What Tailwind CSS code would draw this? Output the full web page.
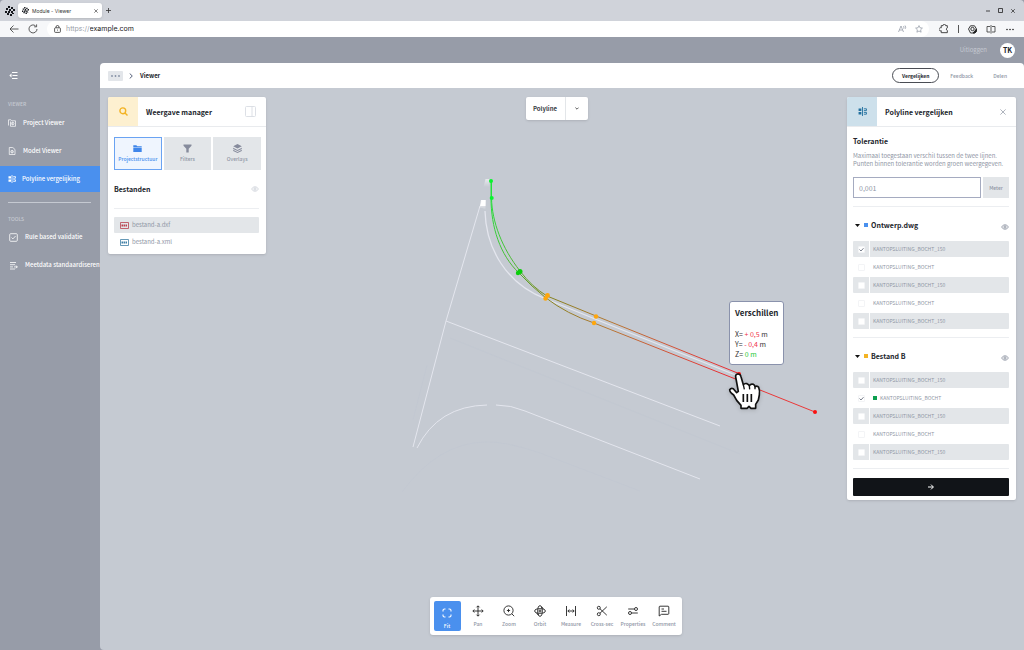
<!DOCTYPE html>
<html lang="nl">
<head>
    <meta charset="UTF-8">
    <meta name="viewport" content="width=device-width, initial-scale=1.0">
    <title>Module - Viewer</title>
    <script src="https://cdn.jsdelivr.net/npm/@tailwindcss/browser@4"></script>
</head>
<body class="bg-[#979ca8] font-['Noto_Sans_CJK_JP',sans-serif] text-[6px] leading-[8px] text-[#8f96a5]">
<div class="flex min-h-screen flex-col">

    <!-- Browser tabs -->
    <div class="flex h-[21px] items-center rounded-t-[4px] bg-[#d0d3da] pl-[5px] font-[Inter,sans-serif] text-[#333]">
        <svg class="size-[10px]" viewBox="0 0 10 10" fill="#16181d"><path d="M3 0h2v2H3zM6 1h2v2H6zM1 2h2v2H1zM4 3h2v2H4zM8 3h2v2H8zM0 5h2v2H0zM3 5h2v2H3zM6 5h2v2H6zM2 7h2v2H2zM5 8h2v2H5zM7 7h2v1H7z"/></svg>
        <div class="ml-[3px] flex h-[15px] w-[84px] items-center rounded-[3px] bg-white px-[4px] shadow-sm">
            <svg class="size-[7px]" viewBox="0 0 10 10" fill="#16181d"><path d="M3 0h2v2H3zM6 1h2v2H6zM1 2h2v2H1zM4 3h2v2H4zM8 3h2v2H8zM0 5h2v2H0zM3 5h2v2H3zM6 5h2v2H6zM2 7h2v2H2zM5 8h2v2H5zM7 7h2v1H7z"/></svg>
            <span class="ml-[3px] flex-1 text-[5px]">Module - Viewer</span>
            <button aria-label="Sluiten"><svg class="size-[4px]" viewBox="0 0 4 4" stroke="#333" stroke-width=".6"><path d="M.3.3l3.4 3.4M3.7.3L.3 3.7"/></svg></button>
        </div>
        <button class="ml-[4px]" aria-label="Nieuw tabblad"><svg class="size-[5px]" viewBox="0 0 5 5" stroke="#333" stroke-width=".8"><path d="M2.5 0v5M0 2.5h5"/></svg></button>
        <div class="ml-auto flex items-center gap-[8px] pr-[9px]">
            <svg class="size-[4px]" viewBox="0 0 4 4" stroke="#222" stroke-width=".8"><path d="M0 2h4"/></svg>
            <svg class="size-[5px]" viewBox="0 0 5 5" fill="none" stroke="#222" stroke-width=".8"><path d="M.5.5h4v4h-4z"/></svg>
            <svg class="size-[4px]" viewBox="0 0 4 4" stroke="#222" stroke-width=".7"><path d="M.2.2l3.6 3.6M3.8.2L.2 3.8"/></svg>
        </div>
    </div>

    <!-- Address bar -->
    <div class="flex h-[16px] items-center bg-[#f6f7f9] pl-[9px] pr-[10px]">
        <svg class="h-[8px] w-[10px]" viewBox="0 0 10 8" fill="none" stroke="#333" stroke-width=".8"><path d="M9.5 4H1M4.5.5L1 4l3.5 3.5"/></svg>
        <svg class="ml-[9px] size-[10px]" viewBox="0 0 10 10" fill="none" stroke="#333" stroke-width=".8"><path d="M9 5a4 4 0 1 1-1.500-3.200M8.600.4v2.400H6.200"/></svg>
        <div class="ml-[9px] flex h-[16px] flex-1 items-center rounded-full bg-white pl-[7px] pr-[6px] font-[Inter,sans-serif] text-[7px]">
            <svg class="h-[8px] w-[7px]" viewBox="0 0 7 8" fill="none" stroke="#333" stroke-width=".8"><rect x=".6" y="2.8" width="5.8" height="4.6" rx=".8"/><path d="M2 2.800V2a1.500 1.500 0 0 1 3 0v.8M3.500 4.600v1"/></svg>
            <label for="address" class="ml-[5px] text-[#9aa0a9]">https://</label>
            <input id="address" type="text" value="example.com" class="min-w-0 flex-1 text-[#222]">
            <svg class="h-[8px] w-[9px]" viewBox="0 0 9 8" fill="none" stroke="#8d93a1" stroke-width=".7"><path d="M.5 7L3 1l2.500 6M1.400 5h3.200M5.500 1q1 1 0 2.500M7 .5q1.600 1.500 0 3.500"/></svg>
            <svg class="ml-[8px] size-[8px]" viewBox="0 0 8 8" fill="none" stroke="#8d93a1" stroke-width=".7"><path d="M4 .6l1 2.200 2.400.3-1.800 1.700.5 2.400L4 6l-2.100 1.200.5-2.400L.6 3.100 3 2.800z"/></svg>
        </div>
        <div class="ml-[10px] flex items-center">
            <svg class="size-[10px]" viewBox="0 0 9 9" fill="none" stroke="#333" stroke-width=".8"><path d="M2 1.500h1.600a1.200 1.200 0 0 1 2.400 0h1.500v2a1.200 1.200 0 0 0 0 2.300v2H2V6A1.400 1.400 0 1 1 2 3.500z"/></svg>
            <span class="ml-[9px] h-[8px] w-px bg-[#555]"></span>
            <svg class="ml-[9px] size-[9px]" viewBox="0 0 9 9" fill="none" stroke="#222" stroke-width=".9"><path d="M2.500.8h4L8.500 4 6.500 8h-4L.5 4z"/><circle cx="4.5" cy="4" r="1.7"/><path d="M5 8l3.500-4v2.500L7 8z" fill="#222"/></svg>
            <svg class="ml-[9px] h-[9px] w-[10px]" viewBox="0 0 10 9" fill="none" stroke="#333" stroke-width=".8"><path d="M4 1.500H1v5.500h3M6 1.500h3v5.500H6M5 0v8.600"/></svg>
            <svg class="ml-[10px] h-[3px] w-[8px]" viewBox="0 0 8 3" fill="#222"><circle cx="1" cy="1.5" r=".8"/><circle cx="4" cy="1.5" r=".8"/><circle cx="7" cy="1.5" r=".8"/></svg>
        </div>
    </div>

    <!-- App header -->
    <header class="flex h-[26px] items-center justify-end gap-[13px] pr-[9px]">
        <a href="#" class="text-[#c5c9d1]">Uitloggen</a>
        <span class="grid size-[15px] place-items-center rounded-full bg-white text-[7px] font-bold text-[#22252b]">TK</span>
    </header>

    <div class="flex flex-1">
        <!-- Sidebar -->
        <nav class="w-[100px] shrink-0 whitespace-nowrap font-medium text-white">
            <button class="ml-[9px] mt-[8px] block" aria-label="Menu inklappen"><svg class="size-[9px]" viewBox="0 0 9 9" fill="none" stroke="#fff" stroke-width="1"><path d="M3 1.500h5.500M3.500 4.500h5M3 7.500h5.500"/><path d="M2.500 2.500v4L.3 4.500z" fill="#fff" stroke="none"/></svg></button>
            <h2 class="ml-[8px] mt-[20px] text-[5px] text-[#c5c9d1]">VIEWER</h2>
            <a href="#" class="mt-[2px] flex h-[26px] items-center gap-[7px] pl-[8px]">
                <svg class="size-[8px] shrink-0" viewBox="0 0 8 8" fill="none" stroke="#fff" stroke-width=".7"><path d="M.5 6.500v-5.700h2.400l.8 1h3.800v5.500H2.500V2.500"/><circle cx="4.7" cy="4.5" r="1.3"/><path d="M4.700 3.200v2.600"/></svg>
                Project Viewer
            </a>
            <a href="#" class="mt-[2px] flex h-[26px] items-center gap-[7px] pl-[8px]">
                <svg class="size-[8px] shrink-0" viewBox="0 0 8 8" fill="none" stroke="#fff" stroke-width=".7"><path d="M1.300.5h3.500l2.200 2v5H1.300z"/><circle cx="4.1" cy="4.7" r="1.3"/><path d="M4.100 3.400V6"/></svg>
                Model Viewer
            </a>
            <a href="#" class="mt-[2px] flex h-[26px] items-center gap-[6px] bg-[#4a90ee] pl-[8px]">
                <svg class="size-[8px] shrink-0" viewBox="0 0 8 8" fill="none" stroke="#fff" stroke-width=".8"><path d="M4 0v8M5.200 1.600h2.300v1.600H5.200M5.200 4.800h2.300v1.600H5.200"/><path d="M.5 1.300H3v2.200H.5zM.5 4.500H3v2.200H.5z" fill="#fff" stroke="none"/></svg>
                Polyline vergelijking
            </a>
            <hr class="ml-[8px] mr-[9px] mt-[10px] border-[#c5c9d1]">
            <h2 class="ml-[8px] mt-[12px] text-[5px] text-[#c5c9d1]">TOOLS</h2>
            <a href="#" class="mt-[1px] flex h-[26px] items-center gap-[7px] pl-[9px]">
                <svg class="size-[9px] shrink-0" viewBox="0 0 9 9" fill="none" stroke="#fff" stroke-width=".8"><rect x=".7" y=".7" width="7.6" height="7.6" rx="1"/><path d="M2.500 4.500l1.400 1.400L6.600 3"/></svg>
                Rule based validatie
            </a>
            <a href="#" class="mt-[2px] flex h-[26px] items-center gap-[7px] pl-[9px]">
                <svg class="size-[9px] shrink-0" viewBox="0 0 9 9" fill="none" stroke="#fff" stroke-width=".8"><path d="M1 1.500h6M1 3.700h5M1 5.900h3M1 8h5M5 5.900h3.500M6.700 4.500L8.300 5.900 6.700 7.300"/></svg>
                Meetdata standaardiseren
            </a>
        </nav>

        <main class="flex min-w-0 flex-1 flex-col overflow-hidden rounded-l-[4px] rounded-tr-[4px]">
            <div class="flex h-[25px] shrink-0 items-center bg-white pl-[8px] pr-[8px]">
                <button class="grid h-[10px] w-[15px] place-items-center rounded-[1px] bg-[#e3e6ea]" aria-label="Meer"><svg class="h-[2px] w-[9px]" viewBox="0 0 9 2" fill="#8490a5"><circle cx="1" cy="1" r=".9"/><circle cx="4.5" cy="1" r=".9"/><circle cx="8" cy="1" r=".9"/></svg></button>
                <svg class="ml-[6px] h-[6px] w-[4px]" viewBox="0 0 4 6" fill="none" stroke="#56617a" stroke-width="1"><path d="M.7.5L3.300 3 .7 5.500"/></svg>
                <span class="ml-[7px] font-bold text-[#22252b]">Viewer</span>
                <button class="ml-auto h-[15px] w-[47px] rounded-full border border-[#4a4d54] text-[5px] font-bold text-[#22252b]">Vergelijken</button>
                <button class="ml-[11px] text-[5px] font-medium">Feedback</button>
                <button class="ml-[20px] mr-[9px] text-[5px] font-medium">Delen</button>
            </div>

            <!-- Viewer canvas -->
            <div class="relative flex flex-1 flex-col justify-between bg-[#c5cad2]">
                <svg class="absolute left-0 top-0 h-[562px] w-[924px]" viewBox="100 88 924 562" fill="none">
                    <defs>
                        <linearGradient id="ramp" gradientUnits="userSpaceOnUse" x1="491" y1="190" x2="740" y2="375">
                            <stop offset="0" stop-color="#23e23c"/><stop offset=".22" stop-color="#55b235"/><stop offset=".36" stop-color="#85821f"/><stop offset=".58" stop-color="#b87635"/><stop offset=".85" stop-color="#dd4438"/><stop offset="1" stop-color="#ec2530"/>
                        </linearGradient>
                        <linearGradient id="blob" x1="0" y1="0" x2="0" y2="1"><stop offset="0" stop-color="#fff"/><stop offset="1" stop-color="#fff" stop-opacity="0"/></linearGradient>
                    </defs>
                    <g stroke="#bdc3cf" stroke-opacity=".5" stroke-width=".6">
                        <path d="M450 338L740 454M402 492Q438 443 485 442Q505 441 540 453L640 491M413 420L427 365"/>
                    </g>
                    <g stroke="#e4e6ee" stroke-width="1">
                        <path d="M480 206L446 321L413 447M446 321L720 426"/>
                        <path d="M417 448Q438 406 487 405M496 405Q511 405 525 411L700 479"/>
                        <path d="M485 211C486 248 506 284 546 299L600 321L738 376" stroke-width="1.3"/>
                    </g>
                    <path d="M481 200h4.500v10q-4-3-6-2z" fill="url(#blob)"/>
                    <path d="M480 206l2-6h3.500v6z" fill="#fff"/>
                    <path d="M485.500 179h4v8h-6z" fill="url(#blob)" opacity=".6"/>
                    <g stroke="url(#ramp)">
                        <path d="M491 181V198C491 227 500 255 519 273L532 286L546 298Q567 314 594 323L738 380"/>
                        <path d="M491.500 181V198C492 222 502 248 520 271Q532 287 547 296L596 316L740 374"/>
                    </g>
                    <path d="M755 388L815 412" stroke="#ea3838"/>
                    <g fill="#08f52d"><circle cx="491" cy="181" r="2"/><circle cx="491.7" cy="198" r="2"/></g>
                    <g fill="#0bce0b"><circle cx="520" cy="271.5" r="2.500"/><circle cx="518" cy="273" r="2.2"/></g>
                    <g fill="#ffa60c"><circle cx="547.5" cy="295.5" r="2.4"/><circle cx="545.5" cy="298.5" r="2.2"/><circle cx="596" cy="316.5" r="2.2"/><circle cx="594" cy="323" r="2.2"/></g>
                    <g fill="#fb1010"><circle cx="739" cy="374" r="2"/><circle cx="815" cy="412" r="2"/></g>
                </svg>

                <!-- Difference tooltip -->
                <div class="absolute left-[629px] top-[213px] w-[55px] rounded-[3px] border border-[#8a92ac] bg-white pt-[6px] pb-[5px] pl-[5px] text-[7px] leading-[10px] text-[#333]">
                    <h3 class="mb-[11px] text-[8px] font-bold text-[#22252b]">Verschillen</h3>
                    <p>X= <span class="text-[#f0304a]">+ 0,5</span> m</p>
                    <p>Y= <span class="text-[#f0304a]">- 0,4</span> m</p>
                    <p>Z= <span class="text-[#22c832]">0 m</span></p>
                </div>
                <svg class="absolute left-[628px] top-[284px] h-[38px] w-[34px] drop-shadow-sm" viewBox="264 243 102 114" stroke="#111" stroke-width="5" stroke-linejoin="round">
                    <path d="M287 258Q286 249 294 249Q301 249 303 257L310 281Q314 276 321 278Q326 280 328 284Q333 277 340 280Q344 282 345 287Q352 283 356 289Q360 297 358 312L355 327L347 340V352H333L327 346L321 352H303V343L290 328L281 312Q269 303 269 296Q273 290 280 293L290 305L295 301Z" fill="#fff"/>
                    <path d="M310 309v24M322 309v24M334 309v24"/>
                    <path d="M310 281l3 14M328 284l1 11M345 287v8" stroke-width="4"/>
                </svg>

                <div class="relative grid grid-cols-[1fr_auto_1fr] items-start pl-[8px] pr-[8px] pt-[9px]">
                    <!-- Weergave manager -->
                    <section class="w-[158px] rounded-[2px] bg-white shadow-sm">
                        <div class="flex h-[30px] items-center border-b border-[#e9ebee]">
                            <span class="grid h-[29px] w-[30px] place-items-center rounded-tl-[2px] bg-[#fdf0d0]"><svg class="size-[9px]" viewBox="0 0 9 9" fill="none" stroke="#f3b324" stroke-width="1.4"><circle cx="3.8" cy="3.8" r="2.9"/><path d="M6 6l2.500 2.500"/></svg></span>
                            <h2 class="ml-[8px] flex-1 text-[7px] font-bold text-[#22252b]">Weergave manager</h2>
                            <button class="mr-[10px]" aria-label="Paneel"><svg class="size-[11px]" viewBox="0 0 11 11" fill="none" stroke="#d9dde3" stroke-width=".9"><rect x=".5" y=".5" width="10" height="10" rx="1"/><path d="M7 .5v10"/></svg></button>
                        </div>
                        <div class="pb-[4px] pl-[6px] pr-[5px]">
                            <div class="mt-[10px] grid grid-cols-3 gap-[2px] text-[5px] font-medium">
                                <button class="flex h-[33px] flex-col items-center justify-center gap-[2px] border border-[#6aa3f2] bg-[#eff5fe] text-[#4a90ee]">
                                    <svg class="size-[9px]" viewBox="0 0 9 9" fill="#3f86ea"><path d="M.3 1.200h3l1 1h4.400v1H.3zM.3 3.700h8.400v4.300H.3z"/></svg>
                                    Projectstructuur
                                </button>
                                <button class="flex h-[33px] flex-col items-center justify-center gap-[2px] bg-[#e3e6e9]">
                                    <svg class="size-[9px]" viewBox="0 0 9 9" fill="#868b9c"><path d="M.5.5h8v1.300L5.700 4.800V8.500H3.300V4.800L.5 1.800z"/></svg>
                                    Filters
                                </button>
                                <button class="flex h-[33px] flex-col items-center justify-center gap-[2px] bg-[#e3e6e9]">
                                    <svg class="size-[9px]" viewBox="0 0 9 9" fill="#868b9c"><path d="M4.500 0L8.800 2.200 4.500 4.400.2 2.200zM.2 3.700l4.300 2.200 4.300-2.200v1.200L4.500 7 .2 4.900zM.2 5.800L4.500 8l4.300-2.200V7L4.500 9 .2 7z"/></svg>
                                    Overlays
                                </button>
                            </div>
                            <div class="mt-[14px] flex h-[10px] items-center justify-between pr-[2px]">
                                <h3 class="text-[7px] font-bold text-[#22252b]">Bestanden</h3>
                                <svg class="h-[6px] w-[8px]" viewBox="0 0 8 6" fill="none" stroke="#c6cbd4" stroke-width=".8"><path d="M.5 3Q4-1.500 7.500 3Q4 7.500.5 3z"/><circle cx="4" cy="3" r="1.1"/></svg>
                            </div>
                            <hr class="mr-[2px] mt-[14px] border-[#eceef1]">
                            <ul class="mr-[2px] mt-[8px]">
                                <li class="flex h-[16px] items-center gap-[3px] rounded-[1px] bg-[#e3e6e9] pl-[6px]">
                                    <svg class="h-[7px] w-[9px]" viewBox="0 0 9 7" fill="none" stroke="#b9414e" stroke-width=".8"><path d="M.5.5h8v6h-8z"/><path d="M1.500 3.500h6" stroke-width="2" stroke-dasharray="1.5 .5"/></svg>
                                    bestand-a.dxf
                                </li>
                                <li class="mt-[1px] flex h-[16px] items-center gap-[3px] pl-[6px]">
                                    <svg class="h-[7px] w-[9px]" viewBox="0 0 9 7" fill="none" stroke="#3f7fa5" stroke-width=".8"><path d="M.5.5h8v6h-8z"/><path d="M1.500 3.500h6" stroke-width="2" stroke-dasharray="1.5 .5"/></svg>
                                    bestand-a.xml
                                </li>
                            </ul>
                        </div>
                    </section>

                    <!-- Mode switch -->
                    <div class="mr-[11px] flex h-[23px] w-[62px] rounded-[2px] bg-white font-bold text-[#3a3e46] shadow-sm">
                        <button class="w-[40px] border-r border-[#e3e6e9]">Polyline</button>
                        <button class="grid flex-1 place-items-center" aria-label="Kies type"><svg class="h-[3px] w-[4px]" viewBox="0 0 4 3" fill="none" stroke="#333" stroke-width=".8"><path d="M.4.6L2 2.200 3.600.6"/></svg></button>
                    </div>

                    <!-- Polyline vergelijken -->
                    <section class="w-[169px] justify-self-end rounded-[2px] bg-white shadow-sm">
                        <div class="flex h-[30px] items-center border-b border-[#e9ebee]">
                            <span class="grid h-[29px] w-[30px] place-items-center rounded-tl-[2px] bg-[#cde0eb]"><svg class="size-[9px]" viewBox="0 0 8 8" fill="none" stroke="#23719f" stroke-width=".8"><path d="M4 0v8M5.200 1.600h2.300v1.600H5.200M5.200 4.800h2.300v1.600H5.200"/><path d="M.5 1.300H3v2.200H.5zM.5 4.500H3v2.200H.5z" fill="#23719f" stroke="none"/></svg></span>
                            <h2 class="ml-[8px] flex-1 text-[7px] font-bold text-[#22252b]">Polyline vergelijken</h2>
                            <button class="mr-[10px]" aria-label="Sluiten"><svg class="size-[6px]" viewBox="0 0 6 6" stroke="#8d93a1" stroke-width=".7"><path d="M.4.4l5.200 5.200M5.600.4L.4 5.600"/></svg></button>
                        </div>
                        <div class="pb-[4px] pl-[6px] pr-[7px]">
                            <label for="tolerance" class="mt-[9px] block text-[7px] leading-[10px] font-bold text-[#22252b]">Tolerantie</label>
                            <p class="mt-[6px] whitespace-nowrap">Maximaal toegestaan verschil tussen de twee lijnen.<br>Punten binnen tolerantie worden groen weergegeven.</p>
                            <div class="mt-[9px] flex h-[21px] gap-[2px]">
                                <input id="tolerance" type="text" value="0,001" class="min-w-0 flex-1 border border-[#a5abc0] bg-white px-[5px] text-[7px] text-[#8f96a5]">
                                <span class="grid w-[26px] place-items-center bg-[#e3e6e9] text-[5px] font-medium">Meter</span>
                            </div>
                            <hr class="mt-[8px] border-[#eceef1]">
                            <div class="mt-[13px] flex h-[10px] items-center">
                                <button class="ml-[2px]" aria-label="Inklappen"><svg class="h-[3px] w-[5px]" viewBox="0 0 5 3" fill="#111"><path d="M0 0h5L2.500 3z"/></svg></button>
                                <span class="ml-[4px] size-[4px] bg-[#4a90ee]"></span>
                                <h3 class="ml-[3px] flex-1 text-[7px] font-bold text-[#22252b]">Ontwerp.dwg</h3>
                                <svg class="mt-[3px] h-[6px] w-[8px]" viewBox="0 0 8 6" fill="none" stroke="#7f8696" stroke-width=".8"><path d="M.5 3Q4-1.500 7.500 3Q4 7.500.5 3z"/><circle cx="4" cy="3" r="1.1"/></svg>
                            </div>
                            <ul id="design-list" class="mt-[11px] flex flex-col gap-[2px]"></ul>
                            <hr class="mt-[8px] border-[#eceef1]">
                            <div class="mt-[13px] flex h-[10px] items-center">
                                <button class="ml-[2px]" aria-label="Inklappen"><svg class="h-[3px] w-[5px]" viewBox="0 0 5 3" fill="#111"><path d="M0 0h5L2.500 3z"/></svg></button>
                                <span class="ml-[4px] size-[4px] bg-[#f3b324]"></span>
                                <h3 class="ml-[3px] flex-1 text-[7px] font-bold text-[#22252b]">Bestand B</h3>
                                <svg class="mt-[3px] h-[6px] w-[8px]" viewBox="0 0 8 6" fill="none" stroke="#7f8696" stroke-width=".8"><path d="M.5 3Q4-1.500 7.500 3Q4 7.500.5 3z"/><circle cx="4" cy="3" r="1.1"/></svg>
                            </div>
                            <ul id="file-list" class="mt-[11px] flex flex-col gap-[2px]"></ul>
                            <hr class="mt-[8px] border-[#eceef1]">
                            <button class="mt-[9px] grid h-[18px] w-full place-items-center rounded-[1px] bg-[#111418]" aria-label="Vergelijk"><svg class="h-[6px] w-[6px]" viewBox="0 0 6 6" fill="none" stroke="#fff" stroke-width="1"><path d="M0 3h5.200M3 .6L5.400 3 3 5.400"/></svg></button>
                        </div>
                    </section>
                </div>

                <!-- Bottom toolbar -->
                <div class="relative mb-[15px] mr-[13px] flex gap-[4px] self-center rounded-[3px] bg-white px-[4px] py-[4px] text-[5px] font-medium shadow-sm">
                    <button class="flex h-[30px] w-[27px] flex-col items-center gap-[4px] rounded-[2px] bg-[#4a90ee] pt-[7px] text-white">
                        <svg class="size-[10px]" viewBox="0 0 10 10" fill="none" stroke="#fff" stroke-width="1.1"><path d="M1 3.500V2.500A1.500 1.500 0 0 1 2.500 1h1M6.500 1h1A1.500 1.500 0 0 1 9 2.500v1M9 6.500v1A1.500 1.500 0 0 1 7.500 9h-1M3.500 9h-1A1.500 1.500 0 0 1 1 7.500v-1"/></svg>
                        Fit
                    </button>
                    <button class="flex h-[30px] w-[27px] flex-col items-center gap-[3px] pt-[4px]">
                        <svg class="size-[12px]" viewBox="0 0 12 12" fill="none" stroke="#222" stroke-width=".9"><path d="M6 1v10M1 6h10M4.500 2.300L6 .8l1.500 1.500M4.500 9.700L6 11.200l1.500-1.500M2.300 4.500L.8 6l1.500 1.500M9.700 4.500L11.200 6 9.700 7.500"/></svg>
                        Pan
                    </button>
                    <button class="flex h-[30px] w-[27px] flex-col items-center gap-[3px] pt-[4px]">
                        <svg class="size-[12px]" viewBox="0 0 12 12" fill="none" stroke="#222" stroke-width=".9"><circle cx="5.5" cy="5.5" r="4.6"/><path d="M8.900 8.900l2.300 2.300M5.500 3.900v3.200M3.900 5.500h3.200"/></svg>
                        Zoom
                    </button>
                    <button class="flex h-[30px] w-[27px] flex-col items-center gap-[3px] pt-[4px]">
                        <svg class="size-[12px]" viewBox="0 0 12 12" fill="none" stroke="#222" stroke-width=".9"><ellipse cx="6" cy="6" rx="5.3" ry="2.3"/><ellipse cx="6" cy="6" rx="2.3" ry="5.3"/><circle cx="6" cy="6" r="1"/><path d="M2.800 8.200Q3 9.800 4.800 9.500M9.200 3.800Q9 2.200 7.200 2.500"/></svg>
                        Orbit
                    </button>
                    <button class="flex h-[30px] w-[27px] flex-col items-center gap-[3px] pt-[4px]">
                        <svg class="size-[12px]" viewBox="0 0 12 12" fill="none" stroke="#222" stroke-width=".9"><path d="M1.500 1v10M10.500 1v10M3 6h6M4.300 4.500L2.800 6l1.500 1.500M7.700 4.500L9.200 6 7.700 7.500"/></svg>
                        Measure
                    </button>
                    <button class="flex h-[30px] w-[27px] flex-col items-center gap-[3px] whitespace-nowrap pt-[4px]">
                        <svg class="size-[12px]" viewBox="0 0 12 12" fill="none" stroke="#222" stroke-width=".9"><circle cx="2.8" cy="2.8" r="1.5"/><circle cx="2.8" cy="9.2" r="1.5"/><path d="M4 3.800l6.800 6.400M4 8.200l6.800-6.400"/></svg>
                        Cross-sec
                    </button>
                    <button class="flex h-[30px] w-[27px] flex-col items-center gap-[3px] pt-[4px]">
                        <svg class="size-[12px]" viewBox="0 0 12 12" fill="none" stroke="#222" stroke-width=".9"><path d="M1.200 4h6.300M4.500 8h6.300"/><circle cx="9" cy="4" r="1.5"/><circle cx="3" cy="8" r="1.5"/></svg>
                        Properties
                    </button>
                    <button class="flex h-[30px] w-[27px] flex-col items-center gap-[3px] pt-[4px]">
                        <svg class="size-[12px]" viewBox="0 0 12 12" fill="none" stroke="#222" stroke-width=".9"><path d="M2 1.200h8a.8.8 0 0 1 .8.8v6.500a.8.8 0 0 1-.8.8H3.500L1.200 11V2a.8.8 0 0 1 .8-.8zM3.500 4h2.500M3.500 6.300h5"/></svg>
                        Comment
                    </button>
                </div>
            </div>
        </main>
    </div>
</div>

<script>
    const designLines = [
        { name: 'KANTOPSLUITING_BOCHT_150', checked: true },
        { name: 'KANTOPSLUITING_BOCHT' },
        { name: 'KANTOPSLUITING_BOCHT_150' },
        { name: 'KANTOPSLUITING_BOCHT' },
        { name: 'KANTOPSLUITING_BOCHT_150' },
    ];
    const fileLines = [
        { name: 'KANTOPSLUITING_BOCHT_150' },
        { name: 'KANTOPSLUITING_BOCHT', checked: true, marker: true },
        { name: 'KANTOPSLUITING_BOCHT_150' },
        { name: 'KANTOPSLUITING_BOCHT' },
        { name: 'KANTOPSLUITING_BOCHT_150' },
    ];

    function renderLines(id, lines) {
        document.getElementById(id).innerHTML = lines.map((line, i) => {
            const fill = i % 2 === 0 ? 'bg-[#e3e6e9]' : 'bg-white';
            return `
                <li>
                    <label class="flex h-[16px] gap-px text-[5px]">
                        <span class="grid w-[16px] place-items-center rounded-l-[1px] ${fill}">
                            <input type="checkbox" class="peer col-start-1 row-start-1 size-[7px] appearance-none rounded-[1px] border border-[#f3f4f6] bg-white" ${line.checked ? 'checked' : ''}>
                            <svg class="col-start-1 row-start-1 hidden size-[5px] peer-checked:block" viewBox="0 0 5 5" fill="none" stroke="#6b7280" stroke-width=".9"><path d="M.5 2.500L2 4l2.500-2.800"/></svg>
                        </span>
                        <span class="flex flex-1 items-center gap-[3px] rounded-r-[1px] pl-[3px] ${fill}">
                            ${line.marker ? '<span class="size-[4px] bg-[#0d9f4f]"></span>' : ''}${line.name}
                        </span>
                    </label>
                </li>
            `;
        }).join('');
    }

    renderLines('design-list', designLines);
    renderLines('file-list', fileLines);
</script>
</body>
</html>
